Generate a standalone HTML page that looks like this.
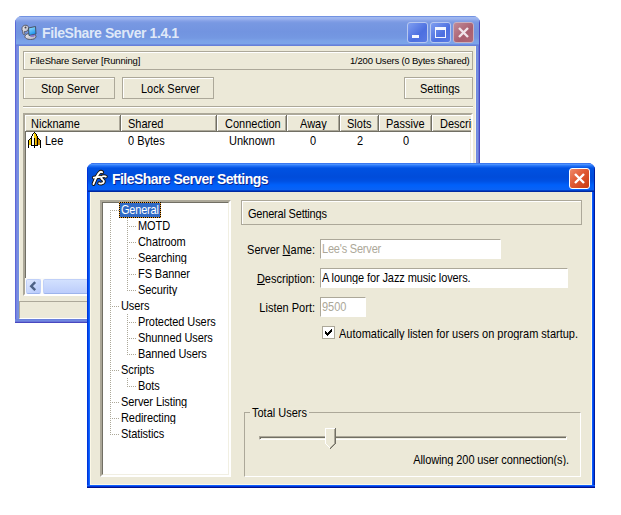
<!DOCTYPE html>
<html><head><meta charset="utf-8">
<style>
*{margin:0;padding:0;box-sizing:border-box}
html,body{width:621px;height:515px;overflow:hidden;background:#fff;font-family:"Liberation Sans",sans-serif;font-size:11px;color:#000}
.a{position:absolute}
.t{position:absolute;white-space:pre;line-height:13px;transform:scaleY(1.1);transform-origin:0 2px}
/* back window */
#w1{left:15px;top:16px;width:465px;height:307px;border-radius:7px 7px 0 0;background:#7a96df;overflow:hidden}
#w1 .tb{left:0;top:0;width:465px;height:30px;background:linear-gradient(#7292e2 0 1px,#a2baf0 1px,#9ab2ee 3px,#84a0e6 5px,#7898e2 7px,#7294e0 16px,#7498e2 22px,#7ba2e8 25px,#7ca4e9 28px,#6e8ee0 28px 29px,#6680d8 29px 30px)}
#w1 .cl{left:4px;top:30px;width:457px;height:273px;background:#ece9d8;border:1px solid #faf6e4;border-top:0}
.etch{border:1px solid #aca899;box-shadow:inset 1px 1px 0 #fff}
.btn{border:1px solid #aca899;box-shadow:inset 1px 1px 0 #fff;background:#ece9d8;text-align:center}
/* front window */
#w2{left:87px;top:163px;width:508px;height:325px;border-radius:7px 7px 0 0;background:#0831d9;overflow:hidden}
#w2 .tb{left:0;top:0;width:508px;height:29px;background:linear-gradient(#3a78f0 0 1px,#4a90ff 1px 2px,#2a7af8 2px 3px,#1a68f0 3px 4px,#0a5ae8 4px 5px,#0052e2 5px,#004cda 14px,#0050e2 18px,#0060fa 22px,#0a62f5 27px,#0040c8 27px 28px,#0028a0 28px 29px)}
#w2 .cl{left:3px;top:29px;width:502px;height:293px;background:#ece9d8;border:1px solid #fcf8e6;border-top:0}
.sunk{border-style:solid;border-width:2px;border-color:#aca899 #fff #fff #aca899}
.sunk:after{content:"";position:absolute;left:0;top:0;right:0;bottom:0;border-style:solid;border-width:1px;border-color:#716f64 #f1efe2 #f1efe2 #716f64}
.fld{border:1px solid #aca899;border-right-color:#fff;border-bottom-color:#fff;background:#fff}
.hd{top:115px;height:17px;background:#ece9d8;border-right:1px solid #716f64;border-bottom:1px solid #716f64;box-shadow:inset 1px 1px 0 #fff,inset -1px -1px 0 #aca899}
.tr{color:#000}
.dv{background:repeating-linear-gradient(#aca899 0 1px,transparent 1px 2px)}
.dh{background:repeating-linear-gradient(90deg,#aca899 0 1px,transparent 1px 2px)}
</style></head><body>

<!-- ================= BACK WINDOW ================= -->
<div id="w1" class="a">
  <div class="a tb"></div>
  <div class="a" style="left:0;top:0;width:1px;height:307px;background:#5a68d8"></div>
  <div class="a" style="left:464px;top:0;width:1px;height:307px;background:#4848c0"></div>
  <div class="a" style="left:0;top:30px;width:4px;height:277px;background:linear-gradient(90deg,#5a68d8 0 1px,#7a80e0 1px 2px,#7590e0 2px 4px)"></div>
  <div class="a" style="left:461px;top:30px;width:4px;height:277px;background:linear-gradient(90deg,#6e88e0 0 1px,#7590e0 1px 2px,#6878d8 2px 3px,#4848c0 3px 4px)"></div>
  <div class="a" style="left:0;top:303px;width:465px;height:4px;background:linear-gradient(#6a80dc 0 1px,#7088e0 1px 2px,#6a78d8 2px 3px,#4848c0 3px 4px)"></div>
  <div class="a cl"></div>
</div>
<!-- title icon -->
<svg class="a" style="left:19px;top:22px" width="20" height="20" viewBox="0 0 20 20">
<defs><linearGradient id="scr" x1="0" y1="0" x2="0.4" y2="1"><stop offset="0" stop-color="#a8ecff"/><stop offset="1" stop-color="#1890f0"/></linearGradient>
<linearGradient id="gry" x1="0" y1="0" x2="1" y2="1"><stop offset="0" stop-color="#f4f4f8"/><stop offset="1" stop-color="#a8a8b8"/></linearGradient></defs>
<path d="M3 7.5C2.5 5 4.5 3 7 3.2C9 3.4 10 5 9.5 7C9 9 7 9.8 5.5 9.5C5 10.5 6 11 6 12C5 13 4 12.5 4 11.5C4 10.5 3.5 9 3 7.5Z" fill="url(#gry)" stroke="#50505a" stroke-width="0.9"/>
<ellipse cx="6.5" cy="5.5" rx="1" ry="0.9" fill="#40404a"/>
<path d="M6 14C6.5 12 9 11.5 12 11.5C15 11.5 17 12.5 17 14.5C17 16.5 14.5 17.5 11.5 17.5C8 17.5 5.5 16 6 14Z" fill="url(#gry)" stroke="#50505a" stroke-width="0.9"/>
<path d="M9.5 6L16.5 4.5L17 12L10 13.5Z" fill="url(#scr)" stroke="#404858" stroke-width="0.9"/>
<path d="M11 13.5L16.5 12.3L15 14.8L11.5 15Z" fill="#7060d0" opacity="0.8"/>
</svg>
<div class="t" style="left:42px;top:25px;font-size:14px;font-weight:bold;color:#dfe8f8;transform:none;line-height:16px;letter-spacing:-0.4px">FileShare Server 1.4.1</div>
<!-- caption buttons -->
<div class="a" style="left:407px;top:22px;width:21px;height:21px;border:1px solid #b8c8f0;border-radius:3px;background:linear-gradient(135deg,#7f9ef0,#4c6fe0 60%,#5a7ae4)"></div>
<div class="a" style="left:412px;top:35px;width:7px;height:3px;background:#f4f7fe"></div>
<div class="a" style="left:430px;top:22px;width:21px;height:21px;border:1px solid #b8c8f0;border-radius:3px;background:linear-gradient(135deg,#7f9ef0,#4c6fe0 60%,#5a7ae4)"></div>
<div class="a" style="left:435px;top:27px;width:11px;height:11px;border:1px solid #f4f7fe;border-top-width:3px"></div>
<div class="a" style="left:453px;top:22px;width:21px;height:21px;border:1px solid #c8b0c0;border-radius:3px;background:linear-gradient(135deg,#c08a98,#a95f70 60%,#b06878)"></div>
<svg class="a" style="left:453px;top:22px" width="21" height="21"><path d="M6 6L15 15M15 6L6 15" stroke="#f0e4ea" stroke-width="2.4"/></svg>

<!-- status box -->
<div class="a etch" style="left:23px;top:51px;width:450px;height:19px"></div>
<div class="t" style="left:30px;top:55px;font-size:9.5px;line-height:12px;transform:none;letter-spacing:-0.17px">FileShare Server [Running]</div>
<div class="t" style="left:350px;top:55px;font-size:9.5px;line-height:12px;transform:none;letter-spacing:-0.2px">1/200 Users (0 Bytes Shared)</div>
<!-- buttons -->
<div class="a btn" style="left:23px;top:77px;width:92px;height:22px"></div>
<div class="t" style="left:41px;top:82px">Stop Server</div>
<div class="a btn" style="left:122px;top:77px;width:92px;height:22px"></div>
<div class="t" style="left:141px;top:82px">Lock Server</div>
<div class="a btn" style="left:404px;top:77px;width:69px;height:22px"></div>
<div class="t" style="left:420px;top:82px">Settings</div>
<!-- separator -->
<div class="a" style="left:23px;top:106px;width:450px;height:1px;background:#aca899"></div>
<div class="a" style="left:23px;top:107px;width:450px;height:1px;background:#fff"></div>
<!-- list -->
<div class="a sunk" style="left:23px;top:113px;width:450px;height:183px;background:#fff"></div>
<div class="a hd" style="left:25px;width:96px"></div>
<div class="a hd" style="left:121px;width:96px"></div>
<div class="a hd" style="left:217px;width:70px"></div>
<div class="a hd" style="left:287px;width:53px"></div>
<div class="a hd" style="left:340px;width:39px"></div>
<div class="a hd" style="left:379px;width:53px"></div>
<div class="a hd" style="left:432px;width:39px;border-right:0;box-shadow:inset 1px 1px 0 #fff,inset 0 -1px 0 #aca899"></div>
<div class="t" style="left:31px;top:117px">Nickname</div>
<div class="t" style="left:128px;top:117px">Shared</div>
<div class="t" style="left:225px;top:117px">Connection</div>
<div class="t" style="left:300px;top:117px">Away</div>
<div class="t" style="left:347px;top:117px">Slots</div>
<div class="t" style="left:386px;top:117px">Passive</div>
<div class="a" style="left:440px;top:115px;width:32px;height:16px;overflow:hidden"><div class="t" style="left:0;top:2px">Description</div></div>
<!-- row -->
<svg class="a" style="left:28px;top:132px" width="13" height="16" shape-rendering="crispEdges"><rect x="6" y="0" width="1" height="1" fill="#000"/><rect x="5" y="1" width="1" height="1" fill="#000"/><rect x="6" y="1" width="1" height="1" fill="#f8d000"/><rect x="7" y="1" width="1" height="1" fill="#000"/><rect x="4" y="2" width="1" height="1" fill="#000"/><rect x="5" y="2" width="1" height="1" fill="#fffce8"/><rect x="6" y="2" width="1" height="1" fill="#f8d000"/><rect x="7" y="2" width="1" height="1" fill="#f8d000"/><rect x="8" y="2" width="1" height="1" fill="#000"/><rect x="4" y="3" width="1" height="1" fill="#000"/><rect x="5" y="3" width="1" height="1" fill="#fffce8"/><rect x="6" y="3" width="1" height="1" fill="#f8d000"/><rect x="7" y="3" width="1" height="1" fill="#f8d000"/><rect x="8" y="3" width="1" height="1" fill="#000"/><rect x="3" y="4" width="1" height="1" fill="#000"/><rect x="4" y="4" width="1" height="1" fill="#fffce8"/><rect x="5" y="4" width="1" height="1" fill="#fffce8"/><rect x="6" y="4" width="1" height="1" fill="#f8d000"/><rect x="7" y="4" width="1" height="1" fill="#f8d000"/><rect x="8" y="4" width="1" height="1" fill="#d09000"/><rect x="9" y="4" width="1" height="1" fill="#000"/><rect x="3" y="5" width="1" height="1" fill="#000"/><rect x="4" y="5" width="1" height="1" fill="#fffce8"/><rect x="5" y="5" width="1" height="1" fill="#fffce8"/><rect x="6" y="5" width="1" height="1" fill="#f8d000"/><rect x="7" y="5" width="1" height="1" fill="#f8d000"/><rect x="8" y="5" width="1" height="1" fill="#d09000"/><rect x="9" y="5" width="1" height="1" fill="#000"/><rect x="2" y="6" width="1" height="1" fill="#000"/><rect x="3" y="6" width="1" height="1" fill="#000"/><rect x="4" y="6" width="1" height="1" fill="#fffce8"/><rect x="5" y="6" width="1" height="1" fill="#fffce8"/><rect x="6" y="6" width="1" height="1" fill="#000"/><rect x="7" y="6" width="1" height="1" fill="#f8d000"/><rect x="8" y="6" width="1" height="1" fill="#d09000"/><rect x="9" y="6" width="1" height="1" fill="#000"/><rect x="10" y="6" width="1" height="1" fill="#000"/><rect x="1" y="7" width="1" height="1" fill="#000"/><rect x="2" y="7" width="1" height="1" fill="#f8d000"/><rect x="3" y="7" width="1" height="1" fill="#000"/><rect x="4" y="7" width="1" height="1" fill="#fffce8"/><rect x="5" y="7" width="1" height="1" fill="#fffce8"/><rect x="6" y="7" width="1" height="1" fill="#000"/><rect x="7" y="7" width="1" height="1" fill="#f8d000"/><rect x="8" y="7" width="1" height="1" fill="#d09000"/><rect x="9" y="7" width="1" height="1" fill="#000"/><rect x="10" y="7" width="1" height="1" fill="#d09000"/><rect x="11" y="7" width="1" height="1" fill="#000"/><rect x="0" y="8" width="1" height="1" fill="#000"/><rect x="1" y="8" width="1" height="1" fill="#f8d000"/><rect x="2" y="8" width="1" height="1" fill="#f8d000"/><rect x="3" y="8" width="1" height="1" fill="#000"/><rect x="4" y="8" width="1" height="1" fill="#fffce8"/><rect x="5" y="8" width="1" height="1" fill="#fffce8"/><rect x="6" y="8" width="1" height="1" fill="#000"/><rect x="7" y="8" width="1" height="1" fill="#f8d000"/><rect x="8" y="8" width="1" height="1" fill="#d09000"/><rect x="9" y="8" width="1" height="1" fill="#000"/><rect x="10" y="8" width="1" height="1" fill="#d09000"/><rect x="11" y="8" width="1" height="1" fill="#d09000"/><rect x="12" y="8" width="1" height="1" fill="#000"/><rect x="0" y="9" width="1" height="1" fill="#000"/><rect x="1" y="9" width="1" height="1" fill="#f8d000"/><rect x="2" y="9" width="1" height="1" fill="#f8d000"/><rect x="3" y="9" width="1" height="1" fill="#000"/><rect x="4" y="9" width="1" height="1" fill="#fffce8"/><rect x="5" y="9" width="1" height="1" fill="#fffce8"/><rect x="6" y="9" width="1" height="1" fill="#000"/><rect x="7" y="9" width="1" height="1" fill="#f8d000"/><rect x="8" y="9" width="1" height="1" fill="#d09000"/><rect x="9" y="9" width="1" height="1" fill="#000"/><rect x="10" y="9" width="1" height="1" fill="#d09000"/><rect x="11" y="9" width="1" height="1" fill="#d09000"/><rect x="12" y="9" width="1" height="1" fill="#000"/><rect x="0" y="10" width="1" height="1" fill="#000"/><rect x="1" y="10" width="1" height="1" fill="#f8d000"/><rect x="2" y="10" width="1" height="1" fill="#f8d000"/><rect x="3" y="10" width="1" height="1" fill="#000"/><rect x="4" y="10" width="1" height="1" fill="#fffce8"/><rect x="5" y="10" width="1" height="1" fill="#fffce8"/><rect x="6" y="10" width="1" height="1" fill="#000"/><rect x="7" y="10" width="1" height="1" fill="#f8d000"/><rect x="8" y="10" width="1" height="1" fill="#d09000"/><rect x="9" y="10" width="1" height="1" fill="#000"/><rect x="10" y="10" width="1" height="1" fill="#d09000"/><rect x="11" y="10" width="1" height="1" fill="#d09000"/><rect x="12" y="10" width="1" height="1" fill="#000"/><rect x="0" y="11" width="1" height="1" fill="#000"/><rect x="1" y="11" width="1" height="1" fill="#f8d000"/><rect x="2" y="11" width="1" height="1" fill="#f8d000"/><rect x="3" y="11" width="1" height="1" fill="#000"/><rect x="4" y="11" width="1" height="1" fill="#fffce8"/><rect x="5" y="11" width="1" height="1" fill="#fffce8"/><rect x="6" y="11" width="1" height="1" fill="#000"/><rect x="7" y="11" width="1" height="1" fill="#f8d000"/><rect x="8" y="11" width="1" height="1" fill="#d09000"/><rect x="9" y="11" width="1" height="1" fill="#000"/><rect x="10" y="11" width="1" height="1" fill="#d09000"/><rect x="11" y="11" width="1" height="1" fill="#d09000"/><rect x="12" y="11" width="1" height="1" fill="#000"/><rect x="0" y="12" width="1" height="1" fill="#000"/><rect x="1" y="12" width="1" height="1" fill="#f8d000"/><rect x="2" y="12" width="1" height="1" fill="#f8d000"/><rect x="3" y="12" width="1" height="1" fill="#000"/><rect x="4" y="12" width="1" height="1" fill="#fffce8"/><rect x="5" y="12" width="1" height="1" fill="#fffce8"/><rect x="6" y="12" width="1" height="1" fill="#000"/><rect x="7" y="12" width="1" height="1" fill="#f8d000"/><rect x="8" y="12" width="1" height="1" fill="#d09000"/><rect x="9" y="12" width="1" height="1" fill="#000"/><rect x="10" y="12" width="1" height="1" fill="#d09000"/><rect x="11" y="12" width="1" height="1" fill="#d09000"/><rect x="12" y="12" width="1" height="1" fill="#000"/><rect x="0" y="13" width="1" height="1" fill="#000"/><rect x="3" y="13" width="1" height="1" fill="#000"/><rect x="4" y="13" width="1" height="1" fill="#000"/><rect x="5" y="13" width="1" height="1" fill="#000"/><rect x="6" y="13" width="1" height="1" fill="#000"/><rect x="7" y="13" width="1" height="1" fill="#000"/><rect x="8" y="13" width="1" height="1" fill="#000"/><rect x="9" y="13" width="1" height="1" fill="#000"/><rect x="12" y="13" width="1" height="1" fill="#000"/><rect x="0" y="14" width="1" height="1" fill="#000"/><rect x="6" y="14" width="1" height="1" fill="#000"/><rect x="12" y="14" width="1" height="1" fill="#000"/><rect x="0" y="15" width="1" height="1" fill="#000"/><rect x="6" y="15" width="1" height="1" fill="#000"/><rect x="12" y="15" width="1" height="1" fill="#000"/></svg>
<div class="t" style="left:45px;top:134px">Lee</div>
<div class="t" style="left:128px;top:134px">0 Bytes</div>
<div class="t" style="left:229px;top:134px">Unknown</div>
<div class="t" style="left:310px;top:134px">0</div>
<div class="t" style="left:357px;top:134px">2</div>
<div class="t" style="left:403px;top:134px">0</div>
<!-- h scrollbar -->
<div class="a" style="left:25px;top:278px;width:446px;height:16px;background:#fcfcfa"></div>
<div class="a" style="left:26px;top:279px;width:15px;height:15px;border:1px solid #c0d0f8;border-bottom-color:#9db4ec;border-radius:2px;background:linear-gradient(135deg,#e2eafe,#c4d4fc 60%,#b8cafa)"></div>
<svg class="a" style="left:26px;top:279px" width="15" height="15"><path d="M9.2 3.2L5.2 7.2L9.2 11.2" stroke="#4d6185" stroke-width="2.4" fill="none"/></svg>
<div class="a" style="left:43px;top:279px;width:100px;height:15px;border:1px solid #c0d0f8;border-bottom-color:#9db4ec;border-radius:2px;background:linear-gradient(#d2e0fe,#bccdfb)"></div>
<!-- status bar -->
<div class="a" style="left:19px;top:301px;width:457px;height:18px;border-top:1px solid #aca899;border-left:1px solid #aca899;border-bottom:1px solid #fff"></div>

<!-- ================= FRONT WINDOW ================= -->
<div id="w2" class="a">
  <div class="a tb"></div>
  <div class="a" style="left:0;top:0;width:1px;height:325px;background:#0030d8"></div>
  <div class="a" style="left:507px;top:0;width:1px;height:325px;background:#001c9c"></div>
  <div class="a" style="left:0;top:29px;width:3px;height:296px;background:linear-gradient(90deg,#0033dd 0 1px,#0050f0 1px 2px,#1868ff 2px 3px)"></div>
  <div class="a" style="left:505px;top:29px;width:3px;height:296px;background:linear-gradient(90deg,#0a5cff 0 1px,#0040e0 1px 2px,#001c9c 2px 3px)"></div>
  <div class="a" style="left:0;top:322px;width:508px;height:3px;background:linear-gradient(#1060ff 0 1px,#0034d4 1px 2px,#00128c 2px 3px)"></div>
  <div class="a cl"></div>
</div>
<svg class="a" style="left:90px;top:168px" width="22" height="20" viewBox="0 0 22 20" fill="none" stroke-linecap="round" stroke-linejoin="round">
<g stroke="#1a1208" stroke-width="3.8"><path d="M3.5 16C5 12 7.5 6.5 9.5 4.5C10.5 3.5 11.5 3.6 12.2 4.2"/><path d="M3.8 9.6L10.2 8.8"/><path d="M15.8 8.6C14 7.6 11 8.4 11.2 10C11.5 11.6 14.2 11.6 13.9 13.6C13.6 15.6 10.5 16 9.2 15.2"/></g>
<g stroke="#fff" stroke-width="1.9"><path d="M3.5 16C5 12 7.5 6.5 9.5 4.5C10.5 3.5 11.5 3.6 12.2 4.2"/><path d="M3.8 9.6L10.2 8.8"/><path d="M15.8 8.6C14 7.6 11 8.4 11.2 10C11.5 11.6 14.2 11.6 13.9 13.6C13.6 15.6 10.5 16 9.2 15.2"/></g>
</svg>
<div class="t" style="left:112px;top:171px;font-size:14px;font-weight:bold;color:#fff;transform:none;line-height:16px;letter-spacing:-0.55px;text-shadow:1px 1px 0 #0a2590">FileShare Server Settings</div>
<div class="a" style="left:569px;top:168px;width:21px;height:21px;border:1px solid #fff;border-radius:3px;background:linear-gradient(135deg,#f08a6a,#e05a34 45%,#c83a10)"></div>
<svg class="a" style="left:569px;top:168px" width="21" height="21"><path d="M6 6L15 15M15 6L6 15" stroke="#fff" stroke-width="2.4"/></svg>

<!-- tree -->
<div class="a sunk" style="left:100px;top:200px;width:131px;height:277px;background:#fff"></div>
<div class="a" style="left:119px;top:202px;width:42px;height:16px;background:conic-gradient(#000 25%,#f0a030 0 50%,#000 0 75%,#f0a030 0) 0 0/2px 2px"></div><div class="a" style="left:120px;top:203px;width:40px;height:14px;background:#316ac5"></div>
<div class="t" style="left:121px;top:203px;color:#fff;letter-spacing:-0.2px">General</div>
<div class="a dh" style="left:110px;top:210px;width:9px;height:1px"></div>
<div class="t" style="left:138px;top:219px;letter-spacing:-0.08px">MOTD</div>
<div class="a dh" style="left:127px;top:226px;width:9px;height:1px"></div>
<div class="t" style="left:138px;top:235px;letter-spacing:-0.08px">Chatroom</div>
<div class="a dh" style="left:127px;top:242px;width:9px;height:1px"></div>
<div class="t" style="left:138px;top:251px;letter-spacing:-0.08px">Searching</div>
<div class="a dh" style="left:127px;top:258px;width:9px;height:1px"></div>
<div class="t" style="left:138px;top:267px;letter-spacing:-0.08px">FS Banner</div>
<div class="a dh" style="left:127px;top:274px;width:9px;height:1px"></div>
<div class="t" style="left:138px;top:283px;letter-spacing:-0.08px">Security</div>
<div class="a dh" style="left:127px;top:290px;width:9px;height:1px"></div>
<div class="t" style="left:121px;top:299px;letter-spacing:-0.08px">Users</div>
<div class="a dh" style="left:110px;top:306px;width:9px;height:1px"></div>
<div class="t" style="left:138px;top:315px;letter-spacing:-0.08px">Protected Users</div>
<div class="a dh" style="left:127px;top:322px;width:9px;height:1px"></div>
<div class="t" style="left:138px;top:331px;letter-spacing:-0.08px">Shunned Users</div>
<div class="a dh" style="left:127px;top:338px;width:9px;height:1px"></div>
<div class="t" style="left:138px;top:347px;letter-spacing:-0.08px">Banned Users</div>
<div class="a dh" style="left:127px;top:354px;width:9px;height:1px"></div>
<div class="t" style="left:121px;top:363px;letter-spacing:-0.08px">Scripts</div>
<div class="a dh" style="left:110px;top:370px;width:9px;height:1px"></div>
<div class="t" style="left:138px;top:379px;letter-spacing:-0.08px">Bots</div>
<div class="a dh" style="left:127px;top:386px;width:9px;height:1px"></div>
<div class="t" style="left:121px;top:395px;letter-spacing:-0.08px">Server Listing</div>
<div class="a dh" style="left:110px;top:402px;width:9px;height:1px"></div>
<div class="t" style="left:121px;top:411px;letter-spacing:-0.08px">Redirecting</div>
<div class="a dh" style="left:110px;top:418px;width:9px;height:1px"></div>
<div class="t" style="left:121px;top:427px;letter-spacing:-0.08px">Statistics</div>
<div class="a dh" style="left:110px;top:434px;width:9px;height:1px"></div>
<div class="a dv" style="left:110px;top:210px;width:1px;height:225px"></div>
<div class="a dv" style="left:127px;top:218px;width:1px;height:73px"></div>
<div class="a dv" style="left:127px;top:314px;width:1px;height:41px"></div>
<div class="a dv" style="left:127px;top:378px;width:1px;height:9px"></div>
<!-- right panel -->
<div class="a etch" style="left:241px;top:200px;width:341px;height:25px"></div>
<div class="t" style="left:248px;top:207px;letter-spacing:-0.2px">General Settings</div>
<div class="t" style="left:200px;width:115px;text-align:right;top:243px">Server <u>N</u>ame:</div>
<div class="a fld" style="left:320px;top:239px;width:181px;height:20px"></div>
<div class="t" style="left:322px;top:242px;color:#aca899;letter-spacing:-0.2px">Lee's Server</div>
<div class="t" style="left:200px;width:115px;text-align:right;top:272px"><u>D</u>escription:</div>
<div class="a fld" style="left:320px;top:268px;width:248px;height:20px"></div>
<div class="t" style="left:322px;top:271px;letter-spacing:-0.1px">A lounge for Jazz music lovers.</div>
<div class="t" style="left:200px;width:115px;text-align:right;top:301px">Listen Port:</div>
<div class="a fld" style="left:320px;top:297px;width:46px;height:20px"></div>
<div class="t" style="left:322px;top:300px;color:#aca899">9500</div>
<div class="a" style="left:322px;top:326px;width:13px;height:13px;border:1px solid #aca899;background:#fff"></div>
<svg class="a" style="left:325px;top:329px" width="7" height="7" shape-rendering="crispEdges" fill="#000"><rect x="6" y="0" width="1" height="1"/><rect x="5" y="1" width="1" height="1"/><rect x="6" y="1" width="1" height="1"/><rect x="0" y="2" width="1" height="1"/><rect x="4" y="2" width="1" height="1"/><rect x="5" y="2" width="1" height="1"/><rect x="6" y="2" width="1" height="1"/><rect x="0" y="3" width="1" height="1"/><rect x="1" y="3" width="1" height="1"/><rect x="3" y="3" width="1" height="1"/><rect x="4" y="3" width="1" height="1"/><rect x="5" y="3" width="1" height="1"/><rect x="0" y="4" width="1" height="1"/><rect x="1" y="4" width="1" height="1"/><rect x="2" y="4" width="1" height="1"/><rect x="3" y="4" width="1" height="1"/><rect x="4" y="4" width="1" height="1"/><rect x="1" y="5" width="1" height="1"/><rect x="2" y="5" width="1" height="1"/><rect x="3" y="5" width="1" height="1"/><rect x="2" y="6" width="1" height="1"/></svg>
<div class="t" style="left:339px;top:327px">Automatically listen for users on program startup.</div>
<!-- group box -->
<div class="a" style="left:244px;top:412px;width:337px;height:65px;border-style:solid;border-width:1px;border-color:#aca899 #fff #fff #aca899"></div>
<div class="t" style="left:250px;top:406px;padding:0 2px;background:#ece9d8">Total Users</div>
<!-- slider -->
<div class="a" style="left:259px;top:436px;width:308px;height:4px;border-style:solid;border-width:1px;border-color:#aca899 #fff #fff #aca899;background:linear-gradient(90deg,#716f64 0 1px,transparent 1px),linear-gradient(#716f64 0 1px,#f1efe2 1px)"></div>
<svg class="a" style="left:325px;top:428px" width="11" height="21" shape-rendering="crispEdges"><rect x="0" y="0" width="1" height="1" fill="#fff"/><rect x="1" y="0" width="1" height="1" fill="#fff"/><rect x="2" y="0" width="1" height="1" fill="#fff"/><rect x="3" y="0" width="1" height="1" fill="#fff"/><rect x="4" y="0" width="1" height="1" fill="#fff"/><rect x="5" y="0" width="1" height="1" fill="#fff"/><rect x="6" y="0" width="1" height="1" fill="#fff"/><rect x="7" y="0" width="1" height="1" fill="#fff"/><rect x="8" y="0" width="1" height="1" fill="#fff"/><rect x="9" y="0" width="1" height="1" fill="#fff"/><rect x="10" y="0" width="1" height="1" fill="#716f64"/><rect x="0" y="1" width="1" height="1" fill="#fff"/><rect x="1" y="1" width="1" height="1" fill="#ece9d8"/><rect x="2" y="1" width="1" height="1" fill="#ece9d8"/><rect x="3" y="1" width="1" height="1" fill="#ece9d8"/><rect x="4" y="1" width="1" height="1" fill="#ece9d8"/><rect x="5" y="1" width="1" height="1" fill="#ece9d8"/><rect x="6" y="1" width="1" height="1" fill="#ece9d8"/><rect x="7" y="1" width="1" height="1" fill="#ece9d8"/><rect x="8" y="1" width="1" height="1" fill="#ece9d8"/><rect x="9" y="1" width="1" height="1" fill="#aca899"/><rect x="10" y="1" width="1" height="1" fill="#716f64"/><rect x="0" y="2" width="1" height="1" fill="#fff"/><rect x="1" y="2" width="1" height="1" fill="#ece9d8"/><rect x="2" y="2" width="1" height="1" fill="#ece9d8"/><rect x="3" y="2" width="1" height="1" fill="#ece9d8"/><rect x="4" y="2" width="1" height="1" fill="#ece9d8"/><rect x="5" y="2" width="1" height="1" fill="#ece9d8"/><rect x="6" y="2" width="1" height="1" fill="#ece9d8"/><rect x="7" y="2" width="1" height="1" fill="#ece9d8"/><rect x="8" y="2" width="1" height="1" fill="#ece9d8"/><rect x="9" y="2" width="1" height="1" fill="#aca899"/><rect x="10" y="2" width="1" height="1" fill="#716f64"/><rect x="0" y="3" width="1" height="1" fill="#fff"/><rect x="1" y="3" width="1" height="1" fill="#ece9d8"/><rect x="2" y="3" width="1" height="1" fill="#ece9d8"/><rect x="3" y="3" width="1" height="1" fill="#ece9d8"/><rect x="4" y="3" width="1" height="1" fill="#ece9d8"/><rect x="5" y="3" width="1" height="1" fill="#ece9d8"/><rect x="6" y="3" width="1" height="1" fill="#ece9d8"/><rect x="7" y="3" width="1" height="1" fill="#ece9d8"/><rect x="8" y="3" width="1" height="1" fill="#ece9d8"/><rect x="9" y="3" width="1" height="1" fill="#aca899"/><rect x="10" y="3" width="1" height="1" fill="#716f64"/><rect x="0" y="4" width="1" height="1" fill="#fff"/><rect x="1" y="4" width="1" height="1" fill="#ece9d8"/><rect x="2" y="4" width="1" height="1" fill="#ece9d8"/><rect x="3" y="4" width="1" height="1" fill="#ece9d8"/><rect x="4" y="4" width="1" height="1" fill="#ece9d8"/><rect x="5" y="4" width="1" height="1" fill="#ece9d8"/><rect x="6" y="4" width="1" height="1" fill="#ece9d8"/><rect x="7" y="4" width="1" height="1" fill="#ece9d8"/><rect x="8" y="4" width="1" height="1" fill="#ece9d8"/><rect x="9" y="4" width="1" height="1" fill="#aca899"/><rect x="10" y="4" width="1" height="1" fill="#716f64"/><rect x="0" y="5" width="1" height="1" fill="#fff"/><rect x="1" y="5" width="1" height="1" fill="#ece9d8"/><rect x="2" y="5" width="1" height="1" fill="#ece9d8"/><rect x="3" y="5" width="1" height="1" fill="#ece9d8"/><rect x="4" y="5" width="1" height="1" fill="#ece9d8"/><rect x="5" y="5" width="1" height="1" fill="#ece9d8"/><rect x="6" y="5" width="1" height="1" fill="#ece9d8"/><rect x="7" y="5" width="1" height="1" fill="#ece9d8"/><rect x="8" y="5" width="1" height="1" fill="#ece9d8"/><rect x="9" y="5" width="1" height="1" fill="#aca899"/><rect x="10" y="5" width="1" height="1" fill="#716f64"/><rect x="0" y="6" width="1" height="1" fill="#fff"/><rect x="1" y="6" width="1" height="1" fill="#ece9d8"/><rect x="2" y="6" width="1" height="1" fill="#ece9d8"/><rect x="3" y="6" width="1" height="1" fill="#ece9d8"/><rect x="4" y="6" width="1" height="1" fill="#ece9d8"/><rect x="5" y="6" width="1" height="1" fill="#ece9d8"/><rect x="6" y="6" width="1" height="1" fill="#ece9d8"/><rect x="7" y="6" width="1" height="1" fill="#ece9d8"/><rect x="8" y="6" width="1" height="1" fill="#ece9d8"/><rect x="9" y="6" width="1" height="1" fill="#aca899"/><rect x="10" y="6" width="1" height="1" fill="#716f64"/><rect x="0" y="7" width="1" height="1" fill="#fff"/><rect x="1" y="7" width="1" height="1" fill="#ece9d8"/><rect x="2" y="7" width="1" height="1" fill="#ece9d8"/><rect x="3" y="7" width="1" height="1" fill="#ece9d8"/><rect x="4" y="7" width="1" height="1" fill="#ece9d8"/><rect x="5" y="7" width="1" height="1" fill="#ece9d8"/><rect x="6" y="7" width="1" height="1" fill="#ece9d8"/><rect x="7" y="7" width="1" height="1" fill="#ece9d8"/><rect x="8" y="7" width="1" height="1" fill="#ece9d8"/><rect x="9" y="7" width="1" height="1" fill="#aca899"/><rect x="10" y="7" width="1" height="1" fill="#716f64"/><rect x="0" y="8" width="1" height="1" fill="#fff"/><rect x="1" y="8" width="1" height="1" fill="#ece9d8"/><rect x="2" y="8" width="1" height="1" fill="#ece9d8"/><rect x="3" y="8" width="1" height="1" fill="#ece9d8"/><rect x="4" y="8" width="1" height="1" fill="#ece9d8"/><rect x="5" y="8" width="1" height="1" fill="#ece9d8"/><rect x="6" y="8" width="1" height="1" fill="#ece9d8"/><rect x="7" y="8" width="1" height="1" fill="#ece9d8"/><rect x="8" y="8" width="1" height="1" fill="#ece9d8"/><rect x="9" y="8" width="1" height="1" fill="#aca899"/><rect x="10" y="8" width="1" height="1" fill="#716f64"/><rect x="0" y="9" width="1" height="1" fill="#fff"/><rect x="1" y="9" width="1" height="1" fill="#ece9d8"/><rect x="2" y="9" width="1" height="1" fill="#ece9d8"/><rect x="3" y="9" width="1" height="1" fill="#ece9d8"/><rect x="4" y="9" width="1" height="1" fill="#ece9d8"/><rect x="5" y="9" width="1" height="1" fill="#ece9d8"/><rect x="6" y="9" width="1" height="1" fill="#ece9d8"/><rect x="7" y="9" width="1" height="1" fill="#ece9d8"/><rect x="8" y="9" width="1" height="1" fill="#ece9d8"/><rect x="9" y="9" width="1" height="1" fill="#aca899"/><rect x="10" y="9" width="1" height="1" fill="#716f64"/><rect x="0" y="10" width="1" height="1" fill="#fff"/><rect x="1" y="10" width="1" height="1" fill="#ece9d8"/><rect x="2" y="10" width="1" height="1" fill="#ece9d8"/><rect x="3" y="10" width="1" height="1" fill="#ece9d8"/><rect x="4" y="10" width="1" height="1" fill="#ece9d8"/><rect x="5" y="10" width="1" height="1" fill="#ece9d8"/><rect x="6" y="10" width="1" height="1" fill="#ece9d8"/><rect x="7" y="10" width="1" height="1" fill="#ece9d8"/><rect x="8" y="10" width="1" height="1" fill="#ece9d8"/><rect x="9" y="10" width="1" height="1" fill="#aca899"/><rect x="10" y="10" width="1" height="1" fill="#716f64"/><rect x="0" y="11" width="1" height="1" fill="#fff"/><rect x="1" y="11" width="1" height="1" fill="#ece9d8"/><rect x="2" y="11" width="1" height="1" fill="#ece9d8"/><rect x="3" y="11" width="1" height="1" fill="#ece9d8"/><rect x="4" y="11" width="1" height="1" fill="#ece9d8"/><rect x="5" y="11" width="1" height="1" fill="#ece9d8"/><rect x="6" y="11" width="1" height="1" fill="#ece9d8"/><rect x="7" y="11" width="1" height="1" fill="#ece9d8"/><rect x="8" y="11" width="1" height="1" fill="#ece9d8"/><rect x="9" y="11" width="1" height="1" fill="#aca899"/><rect x="10" y="11" width="1" height="1" fill="#716f64"/><rect x="0" y="12" width="1" height="1" fill="#fff"/><rect x="1" y="12" width="1" height="1" fill="#ece9d8"/><rect x="2" y="12" width="1" height="1" fill="#ece9d8"/><rect x="3" y="12" width="1" height="1" fill="#ece9d8"/><rect x="4" y="12" width="1" height="1" fill="#ece9d8"/><rect x="5" y="12" width="1" height="1" fill="#ece9d8"/><rect x="6" y="12" width="1" height="1" fill="#ece9d8"/><rect x="7" y="12" width="1" height="1" fill="#ece9d8"/><rect x="8" y="12" width="1" height="1" fill="#ece9d8"/><rect x="9" y="12" width="1" height="1" fill="#aca899"/><rect x="10" y="12" width="1" height="1" fill="#716f64"/><rect x="0" y="13" width="1" height="1" fill="#fff"/><rect x="1" y="13" width="1" height="1" fill="#ece9d8"/><rect x="2" y="13" width="1" height="1" fill="#ece9d8"/><rect x="3" y="13" width="1" height="1" fill="#ece9d8"/><rect x="4" y="13" width="1" height="1" fill="#ece9d8"/><rect x="5" y="13" width="1" height="1" fill="#ece9d8"/><rect x="6" y="13" width="1" height="1" fill="#ece9d8"/><rect x="7" y="13" width="1" height="1" fill="#ece9d8"/><rect x="8" y="13" width="1" height="1" fill="#ece9d8"/><rect x="9" y="13" width="1" height="1" fill="#aca899"/><rect x="10" y="13" width="1" height="1" fill="#716f64"/><rect x="0" y="14" width="1" height="1" fill="#fff"/><rect x="1" y="14" width="1" height="1" fill="#ece9d8"/><rect x="2" y="14" width="1" height="1" fill="#ece9d8"/><rect x="3" y="14" width="1" height="1" fill="#ece9d8"/><rect x="4" y="14" width="1" height="1" fill="#ece9d8"/><rect x="5" y="14" width="1" height="1" fill="#ece9d8"/><rect x="6" y="14" width="1" height="1" fill="#ece9d8"/><rect x="7" y="14" width="1" height="1" fill="#ece9d8"/><rect x="8" y="14" width="1" height="1" fill="#ece9d8"/><rect x="9" y="14" width="1" height="1" fill="#aca899"/><rect x="10" y="14" width="1" height="1" fill="#716f64"/><rect x="0" y="15" width="1" height="1" fill="#fff"/><rect x="1" y="15" width="1" height="1" fill="#ece9d8"/><rect x="2" y="15" width="1" height="1" fill="#ece9d8"/><rect x="3" y="15" width="1" height="1" fill="#ece9d8"/><rect x="4" y="15" width="1" height="1" fill="#ece9d8"/><rect x="5" y="15" width="1" height="1" fill="#ece9d8"/><rect x="6" y="15" width="1" height="1" fill="#ece9d8"/><rect x="7" y="15" width="1" height="1" fill="#ece9d8"/><rect x="8" y="15" width="1" height="1" fill="#ece9d8"/><rect x="9" y="15" width="1" height="1" fill="#aca899"/><rect x="10" y="15" width="1" height="1" fill="#716f64"/><rect x="1" y="16" width="1" height="1" fill="#fff"/><rect x="2" y="16" width="1" height="1" fill="#ece9d8"/><rect x="3" y="16" width="1" height="1" fill="#ece9d8"/><rect x="4" y="16" width="1" height="1" fill="#ece9d8"/><rect x="5" y="16" width="1" height="1" fill="#ece9d8"/><rect x="6" y="16" width="1" height="1" fill="#ece9d8"/><rect x="7" y="16" width="1" height="1" fill="#ece9d8"/><rect x="8" y="16" width="1" height="1" fill="#aca899"/><rect x="9" y="16" width="1" height="1" fill="#716f64"/><rect x="2" y="17" width="1" height="1" fill="#fff"/><rect x="3" y="17" width="1" height="1" fill="#ece9d8"/><rect x="4" y="17" width="1" height="1" fill="#ece9d8"/><rect x="5" y="17" width="1" height="1" fill="#ece9d8"/><rect x="6" y="17" width="1" height="1" fill="#ece9d8"/><rect x="7" y="17" width="1" height="1" fill="#aca899"/><rect x="8" y="17" width="1" height="1" fill="#716f64"/><rect x="3" y="18" width="1" height="1" fill="#fff"/><rect x="4" y="18" width="1" height="1" fill="#ece9d8"/><rect x="5" y="18" width="1" height="1" fill="#ece9d8"/><rect x="6" y="18" width="1" height="1" fill="#aca899"/><rect x="7" y="18" width="1" height="1" fill="#716f64"/><rect x="4" y="19" width="1" height="1" fill="#fff"/><rect x="5" y="19" width="1" height="1" fill="#aca899"/><rect x="6" y="19" width="1" height="1" fill="#716f64"/><rect x="5" y="20" width="1" height="1" fill="#716f64"/></svg>
<div class="t" style="left:369px;width:200px;text-align:right;top:453px;letter-spacing:-0.1px">Allowing 200 user connection(s).</div>
</body></html>
